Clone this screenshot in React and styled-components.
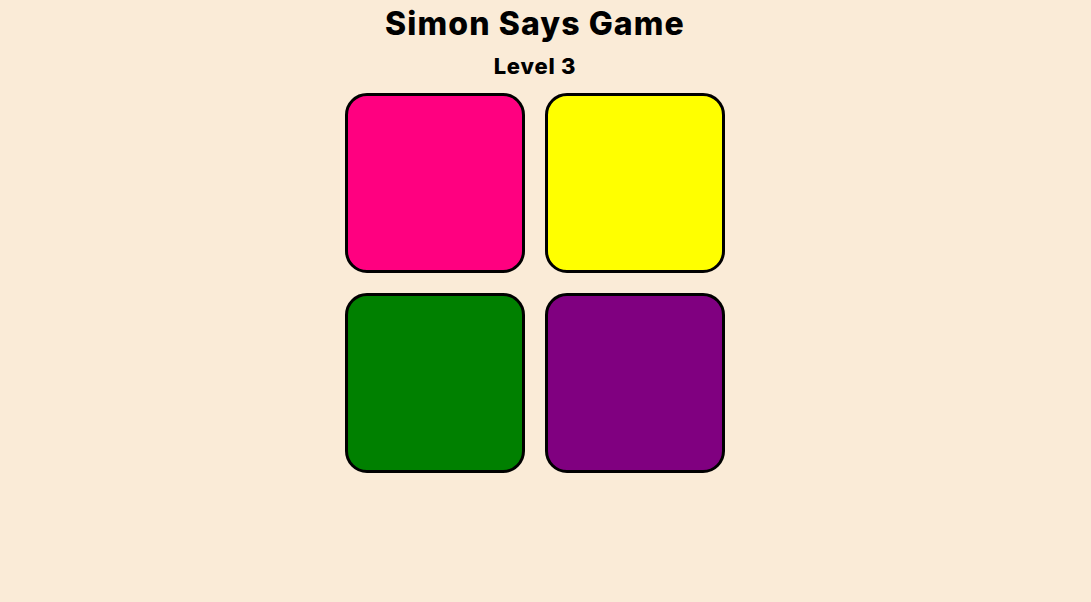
import React from "react";
import styled, { createGlobalStyle } from "styled-components";

const GlobalStyle = createGlobalStyle`
  body {
    margin: 0;
    background-color: antiquewhite;
    font-family: "Inter", "DejaVu Sans", sans-serif;
  }
`;

const Page = styled.div`
  width: 1070px;
  min-height: 602px;
  display: flex;
  flex-direction: column;
  align-items: center;
`;

const Title = styled.h1`
  margin: 0;
  padding-top: 4px;
  font-size: 32px;
  line-height: 40px;
  font-weight: 800;
  letter-spacing: 1.1px;
  color: #000;
`;

const Level = styled.h2`
  margin: 0;
  font-size: 22px;
  line-height: 44px;
  font-weight: 800;
  letter-spacing: 0.8px;
  color: #000;
`;

const Board = styled.div`
  margin-top: 5px;
  display: grid;
  grid-template-columns: repeat(2, 180px);
  grid-auto-rows: 180px;
  gap: 20px;
`;

const Pad = styled.div`
  box-sizing: border-box;
  border: 3px solid #000;
  border-radius: 22px;
  background-color: ${(p) => p.color};
`;

const colors = ["#ff0080", "#ffff00", "#008000", "#800080"];

function App() {
  return (
    <>
      <GlobalStyle />
      <Page>
        <Title>Simon Says Game</Title>
        <Level>Level 3</Level>
        <Board>
          {colors.map((c) => (
            <Pad key={c} color={c} />
          ))}
        </Board>
      </Page>
    </>
  );
}

export default App;
